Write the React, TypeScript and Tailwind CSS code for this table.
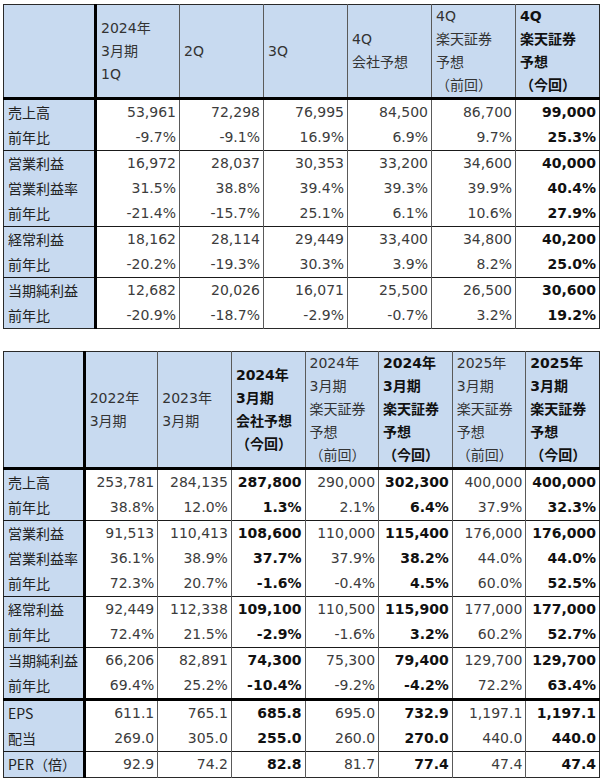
type Group = { label: string; values: string[] }[];

const q1Head: string[][] = [
  ["2024年", "3月期", "1Q"],
  ["2Q"],
  ["3Q"],
  ["4Q", "会社予想"],
  ["4Q", "楽天証券", "予想", "（前回）"],
  ["4Q", "楽天証券", "予想", "（今回）"],
];

const q1Groups: Group[] = [
  [
    { label: "売上高", values: ["53,961", "72,298", "76,995", "84,500", "86,700", "99,000"] },
    { label: "前年比", values: ["-9.7%", "-9.1%", "16.9%", "6.9%", "9.7%", "25.3%"] },
  ],
  [
    { label: "営業利益", values: ["16,972", "28,037", "30,353", "33,200", "34,600", "40,000"] },
    { label: "営業利益率", values: ["31.5%", "38.8%", "39.4%", "39.3%", "39.9%", "40.4%"] },
    { label: "前年比", values: ["-21.4%", "-15.7%", "25.1%", "6.1%", "10.6%", "27.9%"] },
  ],
  [
    { label: "経常利益", values: ["18,162", "28,114", "29,449", "33,400", "34,800", "40,200"] },
    { label: "前年比", values: ["-20.2%", "-19.3%", "30.3%", "3.9%", "8.2%", "25.0%"] },
  ],
  [
    { label: "当期純利益", values: ["12,682", "20,026", "16,071", "25,500", "26,500", "30,600"] },
    { label: "前年比", values: ["-20.9%", "-18.7%", "-2.9%", "-0.7%", "3.2%", "19.2%"] },
  ],
];

const yearHead: string[][] = [
  ["2022年", "3月期"],
  ["2023年", "3月期"],
  ["2024年", "3月期", "会社予想", "（今回）"],
  ["2024年", "3月期", "楽天証券", "予想", "（前回）"],
  ["2024年", "3月期", "楽天証券", "予想", "（今回）"],
  ["2025年", "3月期", "楽天証券", "予想", "（前回）"],
  ["2025年", "3月期", "楽天証券", "予想", "（今回）"],
];

const yearGroups: Group[] = [
  [
    { label: "売上高", values: ["253,781", "284,135", "287,800", "290,000", "302,300", "400,000", "400,000"] },
    { label: "前年比", values: ["38.8%", "12.0%", "1.3%", "2.1%", "6.4%", "37.9%", "32.3%"] },
  ],
  [
    { label: "営業利益", values: ["91,513", "110,413", "108,600", "110,000", "115,400", "176,000", "176,000"] },
    { label: "営業利益率", values: ["36.1%", "38.9%", "37.7%", "37.9%", "38.2%", "44.0%", "44.0%"] },
    { label: "前年比", values: ["72.3%", "20.7%", "-1.6%", "-0.4%", "4.5%", "60.0%", "52.5%"] },
  ],
  [
    { label: "経常利益", values: ["92,449", "112,338", "109,100", "110,500", "115,900", "177,000", "177,000"] },
    { label: "前年比", values: ["72.4%", "21.5%", "-2.9%", "-1.6%", "3.2%", "60.2%", "52.7%"] },
  ],
  [
    { label: "当期純利益", values: ["66,206", "82,891", "74,300", "75,300", "79,400", "129,700", "129,700"] },
    { label: "前年比", values: ["69.4%", "25.2%", "-10.4%", "-9.2%", "-4.2%", "72.2%", "63.4%"] },
  ],
  [
    { label: "EPS", values: ["611.1", "765.1", "685.8", "695.0", "732.9", "1,197.1", "1,197.1"] },
    { label: "配当", values: ["269.0", "305.0", "255.0", "260.0", "270.0", "440.0", "440.0"] },
  ],
  [
    { label: "PER（倍）", values: ["92.9", "74.2", "82.8", "81.7", "77.4", "47.4", "47.4"] },
  ],
];

function Sheet({
  head,
  groups,
  bold,
  headHeight,
  thickBefore,
}: {
  head: string[][];
  groups: Group[];
  bold: number[];
  headHeight: string;
  thickBefore?: number;
}) {
  return (
    <table className="table-fixed border-collapse border-[1.5px] border-[#2a2a2a] font-['DejaVu_Sans','Noto_Sans_CJK_JP',sans-serif] text-[14px]">
      <colgroup>
        <col className="w-[80px]" />
        {head.map((_, i) => (
          <col key={i} className="w-[73px]" />
        ))}
      </colgroup>
      <thead>
        <tr className={headHeight}>
          <th className="bg-[#c8daf0] border-r-[3px] border-r-black border-b-[3px] border-b-black" />
          {head.map((lines, i) => (
            <th
              key={i}
              className={`bg-[#c8daf0] border-l border-l-[#5a5a5a] border-b-[3px] border-b-black px-[4px] text-left align-middle leading-[23px] ${
                bold.includes(i) ? "font-bold text-[#111]" : "font-normal text-[#333]"
              }`}
            >
              {lines.map((l, j) => (
                <div key={j} className="whitespace-nowrap">
                  {l}
                </div>
              ))}
            </th>
          ))}
        </tr>
      </thead>
      {groups.map((rows, g) => (
        <tbody
          key={g}
          className={
            g === 0
              ? ""
              : g === thickBefore
              ? "border-t-[3px] border-t-black"
              : "border-t border-t-[#1a1a1a]"
          }
        >
          {rows.map((r, ri) => (
            <tr key={ri} className="h-[25px]">
              <td className="bg-[#c8daf0] border-r-[3px] border-r-black pl-[4px] whitespace-nowrap text-[#222] font-['Noto_Sans_CJK_JP',sans-serif] leading-[25px]">
                {r.label}
              </td>
              {r.values.map((v, i) => (
                <td
                  key={i}
                  className={`border-l border-l-[#5a5a5a] pr-[3px] text-right whitespace-nowrap leading-[25px] ${
                    bold.includes(i) ? "font-bold text-[#111]" : "text-[#3c3c3c]"
                  }`}
                >
                  {v}
                </td>
              ))}
            </tr>
          ))}
        </tbody>
      ))}
    </table>
  );
}

export default function App() {
  return (
    <div className="w-[600px] h-[784px] bg-white pt-[4px] pl-[3px] flex flex-col gap-[22px]">
      <Sheet head={q1Head} groups={q1Groups} bold={[5]} headHeight="h-[94px]" />
      <Sheet
        head={yearHead}
        groups={yearGroups}
        bold={[2, 4, 6]}
        headHeight="h-[114px]"
        thickBefore={4}
      />
    </div>
  );
}
